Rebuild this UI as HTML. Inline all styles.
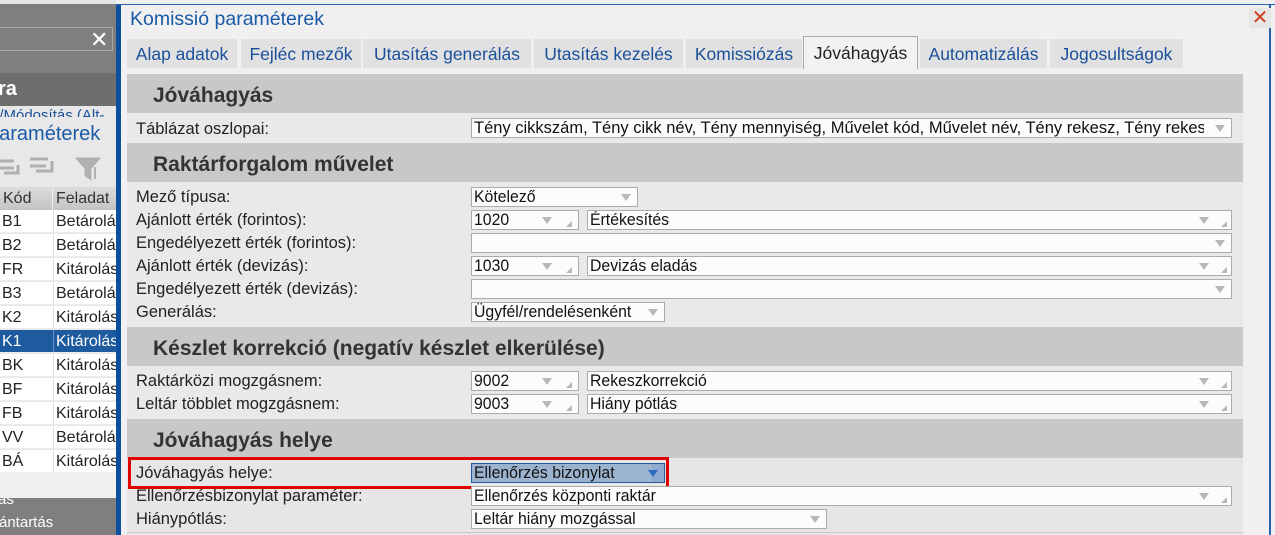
<!DOCTYPE html>
<html><head><meta charset="utf-8"><style>
*{margin:0;padding:0;box-sizing:border-box}
body{width:1275px;height:535px;overflow:hidden;position:relative;background:#f0f0f0;font-family:"Liberation Sans",sans-serif}
.a{position:absolute}
.lbl{position:absolute;left:136px;font-size:16.5px;color:#222;line-height:20px;white-space:nowrap}
.hd{position:absolute;left:127px;width:1116px;height:39px;background:#c8c8c8;font-weight:bold;font-size:21px;color:#333;padding-left:26px;line-height:44px;white-space:nowrap}
.in{position:absolute;height:20px;background:#fcfcfc;border:1px solid #acacac;font-size:17px;line-height:18px;padding-left:2px;color:#111;overflow:hidden;white-space:nowrap}
.in span{display:inline-block;transform:scaleX(.93);transform-origin:left}
.dd{position:absolute;top:6px;width:0;height:0;border-left:5px solid transparent;border-right:5px solid transparent;border-top:7px solid #b8b8b8}
.rs{position:absolute;bottom:2px;width:0;height:0;border-left:6px solid transparent;border-bottom:6px solid #b8b8b8}
.tab{position:absolute;top:39px;height:29px;background:#e1e1e1;color:#1a4f9a;font-size:17.5px;line-height:30px;text-align:center;white-space:nowrap}
.lr{position:absolute;left:0;width:116px;height:23px;background:#fff;border-bottom:1px solid #ececec;font-size:16px;color:#222;line-height:23px;overflow:hidden;white-space:nowrap}
.lr b{font-weight:normal;position:absolute;left:2px}
.lr i{font-style:normal;position:absolute;left:53px;border-left:1px solid #e0e0e0;padding-left:2px;height:23px}
</style></head><body>
<div class="a" style="left:0;top:0;width:116px;height:4px;background:#e6e6e6"></div>
<div class="a" style="left:0;top:4px;width:116px;height:102px;background:#7f7f7f"></div>
<div class="a" style="left:0;top:27px;width:113px;height:24px;border:1px solid #a8a8a8;border-left:none;background:#808080"></div>
<div class="a" style="left:90px;top:27px;color:#fff;font-size:22px">✕</div>
<div class="a" style="left:0;top:73px;width:116px;height:33px;background:#6e6e6e"></div>
<div class="a" style="left:-2px;top:78px;color:#fff;font-size:20px;font-weight:bold">ra</div>
<div class="a" style="left:0;top:106px;width:116px;height:367px;background:#e8e8e8"></div>
<div class="a" style="left:-4px;top:106px;color:#1a4f9a;font-size:15px;white-space:nowrap;width:120px;overflow:hidden;height:11px;line-height:20px">l/Módosítás (Alt-</div>
<div class="a" style="left:-12px;top:123px;color:#1a5aa8;font-size:20px;white-space:nowrap">paraméterek</div>
<svg class="a" style="left:0;top:153px" width="116" height="30"><g fill="none" stroke="#b0b0b0" stroke-width="3"><path d="M0 8h14M0 15h14M4 20h14v-8"/><path d="M30 6h18M30 13h16M52 8v10H36"/><path d="M78 6h20l-8 9v10l-4-3v-7z" fill="#b0b0b0"/><path d="M95 14v12" stroke-width="2"/></g></svg>
<div class="a" style="left:0;top:187px;width:116px;height:23px;background:linear-gradient(#dcdcdc,#c4c4c4);font-size:16px;line-height:23px;color:#333"><span class="a" style="left:3px">Kód</span><span class="a" style="left:52px;border-left:1px solid #eee;padding-left:3px;height:23px">Feladat</span></div>
<div class="lr" style="top:210px"><b>B1</b><i>Betárolás</i></div>
<div class="lr" style="top:234px"><b>B2</b><i>Betárolás</i></div>
<div class="lr" style="top:258px"><b>FR</b><i>Kitárolás</i></div>
<div class="lr" style="top:282px"><b>B3</b><i>Betárolás</i></div>
<div class="lr" style="top:306px"><b>K2</b><i>Kitárolás</i></div>
<div class="lr" style="top:330px;background:#1d5a9e;color:#fff"><b>K1</b><i style="border-color:#6a8fc0">Kitárolás</i></div>
<div class="lr" style="top:354px"><b>BK</b><i>Kitárolás</i></div>
<div class="lr" style="top:378px"><b>BF</b><i>Kitárolás</i></div>
<div class="lr" style="top:402px"><b>FB</b><i>Kitárolás</i></div>
<div class="lr" style="top:426px"><b>VV</b><i>Betárolás</i></div>
<div class="lr" style="top:450px"><b>BÁ</b><i>Kitárolás</i></div>
<div class="a" style="left:0;top:498px;width:116px;height:37px;background:#7f7f7f"></div>
<div class="a" style="left:-6px;top:514px;color:#fff;font-size:15px">rántartás</div>
<div class="a" style="left:-2px;top:498px;color:#fff;font-size:15px;height:9px;overflow:hidden;line-height:3px">ás</div>
<div class="a" style="left:116px;top:4px;width:5px;height:531px;background:#0b4fa0"></div>
<div class="a" style="left:116px;top:4px;width:1159px;height:1px;background:#2a60a8"></div>
<div class="a" style="left:1269px;top:4px;width:2px;height:531px;background:#2a60a8"></div>
<div class="a" style="left:130px;top:8px;color:#1a5aa8;font-size:19.5px">Komissió paraméterek</div>
<div class="a" style="left:1249px;top:8px;width:22px;height:20px;background:#e6e6e6;color:#d04020;font-size:20px;line-height:20px;text-align:center">✕</div>
<div class="tab" style="left:127px;width:110px">Alap adatok</div>
<div class="tab" style="left:241px;width:120px">Fejléc mezők</div>
<div class="tab" style="left:363px;width:168px">Utasítás generálás</div>
<div class="tab" style="left:534px;width:149px">Utasítás kezelés</div>
<div class="tab" style="left:686px;width:116px">Komissiózás</div>
<div class="tab" style="left:803px;width:115px;top:36px;height:33px;background:#f2f2f2;border:1px solid #aaa;border-bottom:none;color:#222;line-height:32px">Jóváhagyás</div>
<div class="tab" style="left:920px;width:127px">Automatizálás</div>
<div class="tab" style="left:1050px;width:133px">Jogosultságok</div>
<div class="a" style="left:127px;top:74px;width:1116px;height:461px;background:#e9e9e9"></div>

<div class="hd" style="top:74px">Jóváhagyás</div>
<div class="lbl" style="top:119px">Táblázat oszlopai:</div>
<div class="in" style="left:471px;top:118px;width:761px;font-size:16.5px"><span style="transform:none;width:730px;overflow:hidden">Tény cikkszám, Tény cikk név, Tény mennyiség, Művelet kód, Művelet név, Tény rekesz, Tény rekesz</span><i class="dd" style="right:6px"></i></div>

<div class="hd" style="top:143px">Raktárforgalom művelet</div>
<div class="lbl" style="top:187px">Mező típusa:</div>
<div class="lbl" style="top:210px">Ajánlott érték (forintos):</div>
<div class="lbl" style="top:233px">Engedélyezett érték (forintos):</div>
<div class="lbl" style="top:256px">Ajánlott érték (devizás):</div>
<div class="lbl" style="top:279px">Engedélyezett érték (devizás):</div>
<div class="lbl" style="top:302px">Generálás:</div>
<div class="in" style="left:471px;top:187px;width:167px"><span>Kötelező</span><i class="dd" style="right:6px"></i></div>
<div class="in" style="left:471px;top:210px;width:108px"><span>1020</span><i class="dd" style="right:26px"></i><i class="rs" style="right:6px"></i></div>
<div class="in" style="left:587px;top:210px;width:645px"><span>Értékesítés</span><i class="dd" style="right:22px"></i><i class="rs" style="right:4px"></i></div>
<div class="in" style="left:471px;top:233px;width:761px"><i class="dd" style="right:6px"></i></div>
<div class="in" style="left:471px;top:256px;width:108px"><span>1030</span><i class="dd" style="right:26px"></i><i class="rs" style="right:6px"></i></div>
<div class="in" style="left:587px;top:256px;width:645px"><span>Devizás eladás</span><i class="dd" style="right:22px"></i><i class="rs" style="right:4px"></i></div>
<div class="in" style="left:471px;top:279px;width:761px"><i class="dd" style="right:6px"></i></div>
<div class="in" style="left:471px;top:302px;width:194px"><span>Ügyfél/rendelésenként</span><i class="dd" style="right:6px"></i></div>

<div class="hd" style="top:327px">Készlet korrekció (negatív készlet elkerülése)</div>
<div class="lbl" style="top:371px">Raktárközi mogzgásnem:</div>
<div class="lbl" style="top:394px">Leltár többlet mogzgásnem:</div>
<div class="in" style="left:471px;top:371px;width:108px"><span>9002</span><i class="dd" style="right:26px"></i><i class="rs" style="right:6px"></i></div>
<div class="in" style="left:587px;top:371px;width:645px"><span>Rekeszkorrekció</span><i class="dd" style="right:22px"></i><i class="rs" style="right:4px"></i></div>
<div class="in" style="left:471px;top:394px;width:108px"><span>9003</span><i class="dd" style="right:26px"></i><i class="rs" style="right:6px"></i></div>
<div class="in" style="left:587px;top:394px;width:645px"><span>Hiány pótlás</span><i class="dd" style="right:22px"></i><i class="rs" style="right:4px"></i></div>

<div class="hd" style="top:419px">Jóváhagyás helye</div>
<div class="a" style="left:127px;top:458px;width:1116px;height:77px;background:#e6e6e6"></div>
<div class="a" style="left:128px;top:457px;width:541px;height:32px;border:3px solid #e00000"></div>
<div class="lbl" style="top:463px">Jóváhagyás helye:</div>
<div class="lbl" style="top:486px">Ellenőrzésbizonylat paraméter:</div>
<div class="lbl" style="top:509px">Hiánypótlás:</div>
<div class="in" style="left:471px;top:463px;width:194px;background:#9cb3d0;border-color:#2a5a9a"><span>Ellenőrzés bizonylat</span><i class="a" style="right:0;top:0;width:12px;height:18px;background:#8faad0"></i><i class="dd" style="right:6px;border-top-color:#2a6ac0"></i></div>
<div class="in" style="left:471px;top:486px;width:761px"><span>Ellenőrzés központi raktár</span><i class="dd" style="right:22px"></i><i class="rs" style="right:4px"></i></div>
<div class="in" style="left:471px;top:509px;width:356px"><span>Leltár hiány mozgással</span><i class="dd" style="right:6px"></i></div>
<div class="a" style="left:127px;top:532px;width:1116px;height:1px;background:#c8c8c8"></div>
</body></html>
